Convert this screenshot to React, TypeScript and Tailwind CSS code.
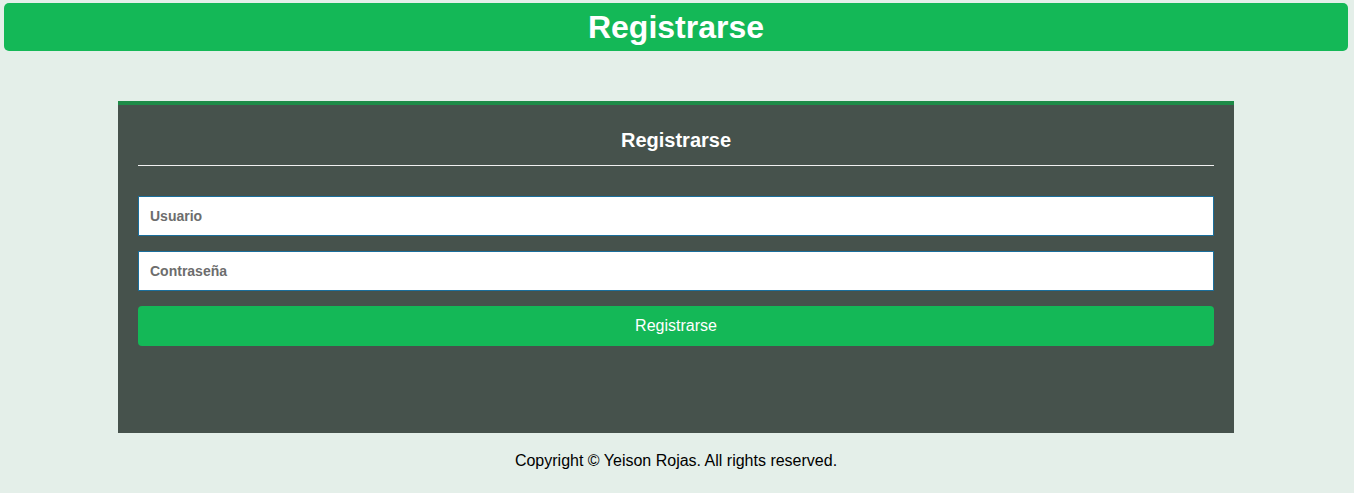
export default function App() {
  return (
    <div className="min-h-screen bg-[#e4efe9] pt-[3px] font-['Liberation_Sans',Arial,sans-serif]">
      {/* Header */}
      <header className="ml-[4px] mr-[6px] rounded-[5px] bg-[#14b857] pt-[6px] pb-[6px] text-center">
        <h1 className="text-[32px] font-bold leading-[36px] text-white">Registrarse</h1>
      </header>

      <div className="pr-[2px]">
        {/* Form card */}
        <main className="mx-auto mt-[50px] w-[1116px] border-t-4 border-[#1e8b48] bg-[#46524c] px-[20px] pt-[24px] pb-[87px]">
          <h2 className="text-center text-[20px] font-bold leading-[23px] text-white">Registrarse</h2>
          <hr className="mt-[13px] border-t border-[#f0f0f0]" />

          <form className="mt-[30px] flex flex-col gap-[15px]">
            <input
              type="text"
              placeholder="Usuario"
              className="h-[40px] w-full border border-[#1b6f9c] bg-white px-[11px] text-[14px] font-bold text-[#333] outline-none placeholder:text-[#6d6d6d]"
            />
            <input
              type="password"
              placeholder="Contraseña"
              className="h-[40px] w-full border border-[#1b6f9c] bg-white px-[11px] text-[14px] font-bold text-[#333] outline-none placeholder:text-[#6d6d6d]"
            />
            <button
              type="button"
              className="h-[40px] w-full rounded-[4px] bg-[#14b857] text-[16px] leading-[18px] text-white"
            >
              Registrarse
            </button>
          </form>
        </main>

        {/* Footer */}
        <footer className="py-[19px] text-center text-[16px] leading-[18px] text-black">
          Copyright © Yeison Rojas. All rights reserved.
        </footer>
      </div>
    </div>
  );
}
